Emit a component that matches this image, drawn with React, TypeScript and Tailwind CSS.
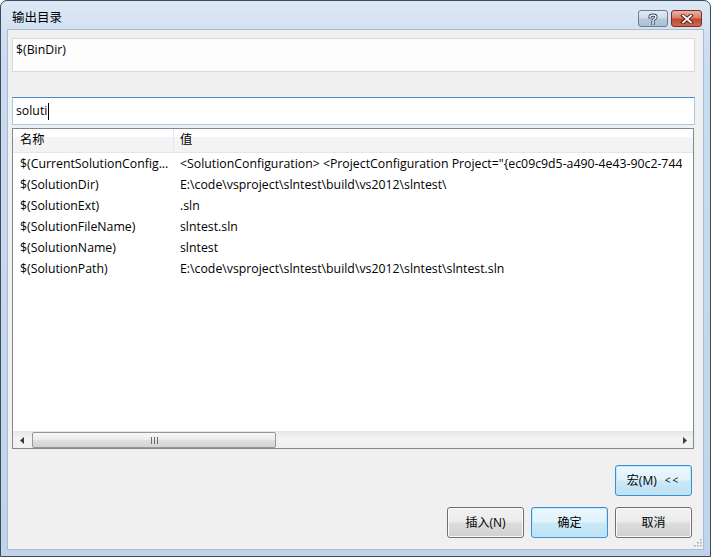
import React from "react";

const ui = "font-['Segoe_UI','Open_Sans','Noto_Sans_CJK_SC',sans-serif]";

const macros: [string, string][] = [
	["$(CurrentSolutionConfig...", '<SolutionConfiguration> <ProjectConfiguration Project="{ec09c9d5-a490-4e43-90c2-744'],
	["$(SolutionDir)", "E:\\code\\vsproject\\slntest\\build\\vs2012\\slntest\\"],
	["$(SolutionExt)", ".sln"],
	["$(SolutionFileName)", "slntest.sln"],
	["$(SolutionName)", "slntest"],
	["$(SolutionPath)", "E:\\code\\vsproject\\slntest\\build\\vs2012\\slntest\\slntest.sln"],
];

function DlgButton({ children, active }: { children: React.ReactNode; active?: boolean }) {
	return (
		<button
			className={
				"flex h-[31px] w-[77px] items-center justify-center rounded-[3px] border text-[12px] text-black " +
				(active
					? "border-[#3c8fd0] bg-[linear-gradient(to_bottom,#ecf7fd_0%,#e0f2fb_48%,#cbe8f7_52%,#bde2f5_100%)] shadow-[inset_0_0_0_1px_#bfe8fb]"
					: "border-[#707070] bg-[linear-gradient(to_bottom,#f2f2f2_0%,#ebebeb_48%,#dddddd_52%,#cfcfcf_100%)] shadow-[inset_0_0_0_1px_#fbfbfb]")
			}
		>
			{children}
		</button>
	);
}

function CaptionButtons() {
	return (
		<div className="flex gap-[3px]">
			<div className="flex h-[17px] w-[30px] items-center justify-center rounded-[3px] border border-[#6b7d92] bg-[linear-gradient(to_bottom,#e4ecf5_0%,#cfdceb_45%,#b6c8dc_55%,#aabfd6_100%)]">
				<svg width="10" height="12" viewBox="0 0 10 12">
					<path
						d="M2 4 C2 1.5 8 1.5 8 4 C8 6 5 6 5 8 M5 9.5 L5 11"
						fill="none"
						stroke="#3b4a5a"
						strokeWidth="3.2"
						strokeLinecap="square"
					/>
					<path
						d="M2 4 C2 1.5 8 1.5 8 4 C8 6 5 6 5 8 M5 9.5 L5 11"
						fill="none"
						stroke="#fff"
						strokeWidth="1.4"
						strokeLinecap="square"
					/>
				</svg>
			</div>
			<div className="flex h-[17px] w-[31px] items-center justify-center rounded-[3px] border border-[#7e2c22] bg-[linear-gradient(to_bottom,#eab1a6_0%,#d9806f_45%,#c4462f_55%,#cf6a4f_100%)]">
				<svg width="14" height="10" viewBox="0 0 14 10">
					<path d="M3 1.5 L11 8.5 M11 1.5 L3 8.5" stroke="#4a1710" strokeWidth="3.6" strokeLinecap="square" />
					<path d="M3 1.5 L11 8.5 M11 1.5 L3 8.5" stroke="#fff" strokeWidth="1.8" strokeLinecap="square" />
				</svg>
			</div>
		</div>
	);
}

function HScrollBar() {
	return (
		<div className="flex h-[17px] shrink-0 items-stretch border-t border-[#e6e6e6] bg-[linear-gradient(to_bottom,#e9e9e9,#f3f3f3_40%,#f0f0f0)]">
			<div className="flex w-[18px] items-center justify-center">
				<svg width="4" height="7" viewBox="0 0 4 7">
					<path d="M4 0 L0 3.5 L4 7 Z" fill="#3a3a3a" />
				</svg>
			</div>
			<div className="ml-px flex w-[244px] items-center justify-center rounded-[2px] border border-[#979797] bg-[linear-gradient(to_bottom,#f7f7f7_0%,#ececec_45%,#dedede_55%,#d4d4d4_100%)]">
				<svg width="7" height="7" viewBox="0 0 7 7">
					<path d="M0.5 0 V7 M3.5 0 V7 M6.5 0 V7" stroke="#6b6b6b" strokeWidth="1" />
				</svg>
			</div>
			<div className="flex-1" />
			<div className="flex w-[17px] items-center justify-center">
				<svg width="4" height="7" viewBox="0 0 4 7">
					<path d="M0 0 L4 3.5 L0 7 Z" fill="#3a3a3a" />
				</svg>
			</div>
		</div>
	);
}

export default function App() {
	return (
		<div className={"h-[557px] w-[711px] overflow-hidden bg-white " + ui}>
			<div className="flex h-full flex-col rounded-t-[7px] border border-[#3f4b59] bg-[linear-gradient(to_bottom,#dce8f5_0%,#cadcef_10%,#bfd4eb_100%)] px-[6px] pb-[6px]">
				{/* title bar */}
				<div className="flex h-[28px] shrink-0 items-start justify-between pt-[9px] pr-[2px] pl-[5px]">
					<span className="text-[12.5px] leading-[16px] text-black">输出目录</span>
					<CaptionButtons />
				</div>

				{/* client */}
				<div className="relative flex flex-1 flex-col border border-[#a7bcd3] bg-[#f0f0f0] pt-2 pr-2 pb-[11px] pl-1 text-[12.3px] text-black">
					<div className="h-[34px] shrink-0 border border-[#dadada] bg-[#fdfdfd] px-[3px] pt-[3px] leading-[16px]">
						$(BinDir)
					</div>

					<div className="mt-[25px] flex h-[28px] shrink-0 items-center border border-[#a9c8e6] border-t-[#4a89c5] bg-white pl-[3px]">
						<span className="leading-[16px]">soluti</span>
						<span className="ml-px inline-block h-[17px] w-px bg-black" />
					</div>

					{/* macro list */}
					<div className="mt-[3px] mr-px flex h-[321px] shrink-0 flex-col overflow-hidden border border-[#828790] bg-white">
						<div className="flex h-[24px] shrink-0 border-b border-[#e4e6e9] bg-[linear-gradient(to_bottom,#ffffff_0%,#ffffff_35%,#f4f5f6_36%,#f1f2f4_100%)]">
							<div className="flex w-[161px] items-center border-r border-[#e3e6ea] pl-[7px]">名称</div>
							<div className="flex items-center pl-[6px]">值</div>
						</div>
						<div className="flex-1 pt-px">
							{macros.map(([name, value]) => (
								<div key={name} className="flex h-[21px] items-center whitespace-nowrap">
									<div className="w-[161px] shrink-0 pl-[7px]">{name}</div>
									<div className="min-w-0 overflow-hidden pl-[6px]">{value}</div>
								</div>
							))}
						</div>
						<HScrollBar />
					</div>

					<div className="mt-4 mr-[3px] flex justify-end">
						<DlgButton active>
							宏(M)
							<span className="ml-2 text-[10px] tracking-[2px]">&lt;&lt;</span>
						</DlgButton>
					</div>
					<div className="mt-[11px] mr-[3px] flex justify-end gap-[7px]">
						<DlgButton>插入(N)</DlgButton>
						<DlgButton active>确定</DlgButton>
						<DlgButton>取消</DlgButton>
					</div>

					{/* size grip */}
					<svg className="absolute right-[1px] bottom-[1px]" width="10" height="10" viewBox="0 0 10 10">
						{[
							[8, 0],
							[8, 3],
							[5, 3],
							[8, 6],
							[5, 6],
							[2, 6],
						].map(([x, y]) => (
							<rect key={`${x}-${y}`} x={x} y={y + 1} width="1.5" height="1.5" fill="#9aa3ad" />
						))}
					</svg>
				</div>
			</div>
		</div>
	);
}
